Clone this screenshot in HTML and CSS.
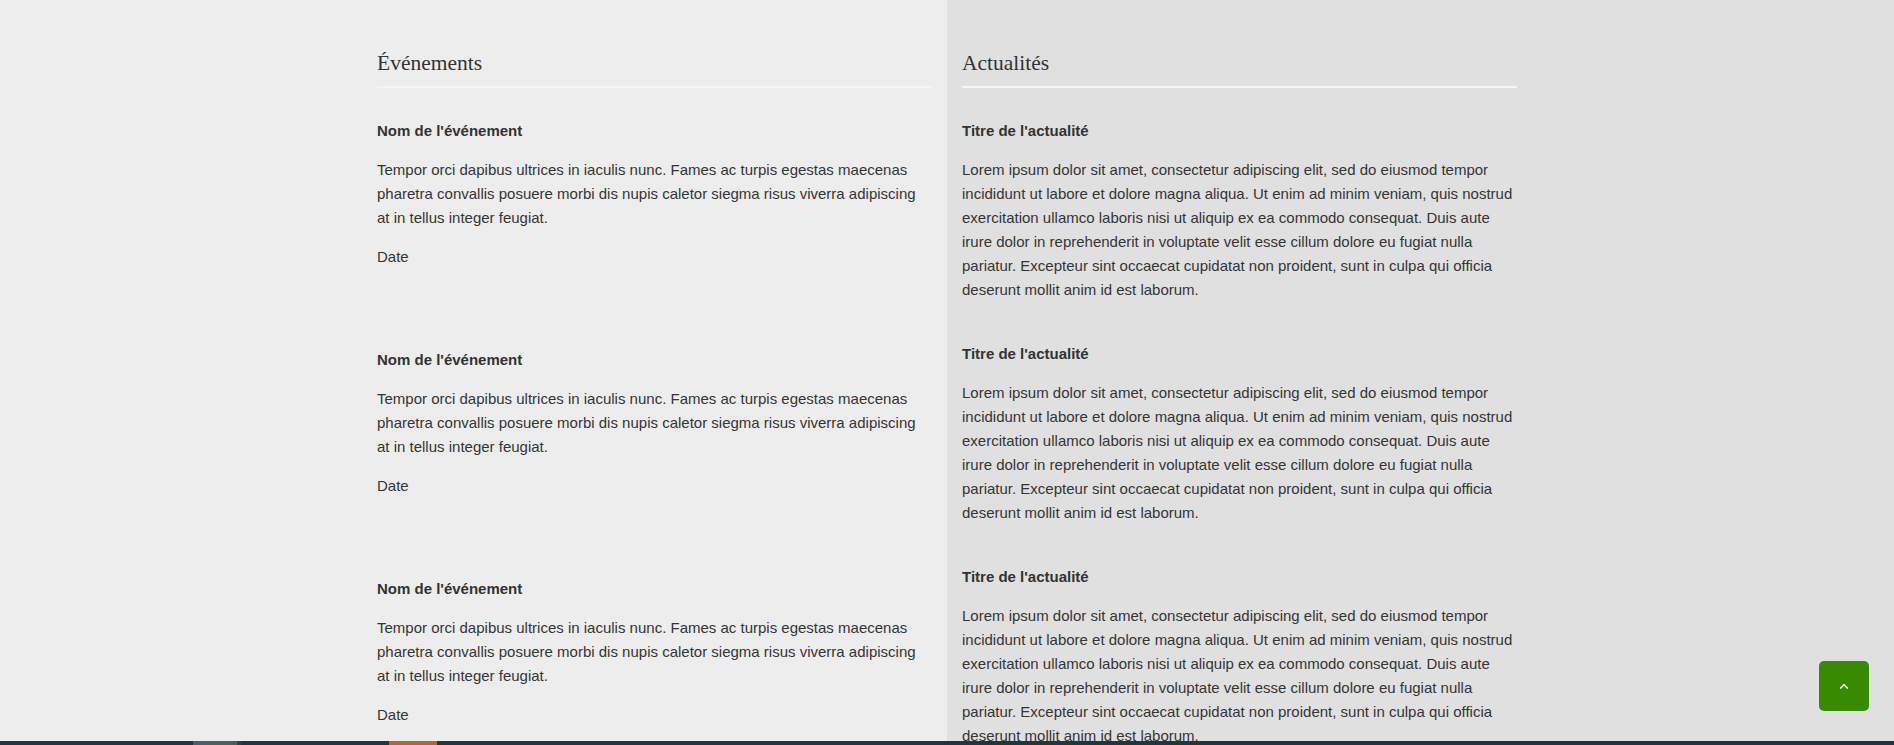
FILE: index.html
```html
<!DOCTYPE html>
<html lang="fr">
<head>
<meta charset="utf-8">
<title>Événements et actualités</title>
<link rel="stylesheet" href="styles.css">
</head>
<body>
<div class="page">
  <main class="split">
    <div class="container">
      <section class="col events">
        <h3 class="col-title">Événements</h3>
        <article class="item event">
          <h4 class="item-title">Nom de l'événement</h4>
          <p class="item-text">Tempor orci dapibus ultrices in iaculis nunc. Fames ac turpis egestas maecenas pharetra convallis posuere morbi dis nupis caletor siegma risus viverra adipiscing at in tellus integer feugiat.</p>
          <p class="item-date">Date</p>
        </article>
        <article class="item event">
          <h4 class="item-title">Nom de l'événement</h4>
          <p class="item-text">Tempor orci dapibus ultrices in iaculis nunc. Fames ac turpis egestas maecenas pharetra convallis posuere morbi dis nupis caletor siegma risus viverra adipiscing at in tellus integer feugiat.</p>
          <p class="item-date">Date</p>
        </article>
        <article class="item event">
          <h4 class="item-title">Nom de l'événement</h4>
          <p class="item-text">Tempor orci dapibus ultrices in iaculis nunc. Fames ac turpis egestas maecenas pharetra convallis posuere morbi dis nupis caletor siegma risus viverra adipiscing at in tellus integer feugiat.</p>
          <p class="item-date">Date</p>
        </article>
      </section>
      <section class="col news">
        <h3 class="col-title">Actualités</h3>
        <article class="item news-item">
          <h4 class="item-title">Titre de l'actualité</h4>
          <p class="item-text">Lorem ipsum dolor sit amet, consectetur adipiscing elit, sed do eiusmod tempor incididunt ut labore et dolore magna aliqua. Ut enim ad minim veniam, quis nostrud exercitation ullamco laboris nisi ut aliquip ex ea commodo consequat. Duis aute irure dolor in reprehenderit in voluptate velit esse cillum dolore eu fugiat nulla pariatur. Excepteur sint occaecat cupidatat non proident, sunt in culpa qui officia deserunt mollit anim id est laborum.</p>
        </article>
        <article class="item news-item">
          <h4 class="item-title">Titre de l'actualité</h4>
          <p class="item-text">Lorem ipsum dolor sit amet, consectetur adipiscing elit, sed do eiusmod tempor incididunt ut labore et dolore magna aliqua. Ut enim ad minim veniam, quis nostrud exercitation ullamco laboris nisi ut aliquip ex ea commodo consequat. Duis aute irure dolor in reprehenderit in voluptate velit esse cillum dolore eu fugiat nulla pariatur. Excepteur sint occaecat cupidatat non proident, sunt in culpa qui officia deserunt mollit anim id est laborum.</p>
        </article>
        <article class="item news-item">
          <h4 class="item-title">Titre de l'actualité</h4>
          <p class="item-text">Lorem ipsum dolor sit amet, consectetur adipiscing elit, sed do eiusmod tempor incididunt ut labore et dolore magna aliqua. Ut enim ad minim veniam, quis nostrud exercitation ullamco laboris nisi ut aliquip ex ea commodo consequat. Duis aute irure dolor in reprehenderit in voluptate velit esse cillum dolore eu fugiat nulla pariatur. Excepteur sint occaecat cupidatat non proident, sunt in culpa qui officia deserunt mollit anim id est laborum.</p>
        </article>
      </section>
    </div>
  </main>
  <footer class="footer-bar">
    <span class="seg seg-gray"></span><span class="seg seg-dim"></span><span class="seg seg-orange"></span>
  </footer>
</div>
<a class="to-top" href="#" aria-label="Haut de page">
  <svg width="10" height="7" viewBox="0 0 10 7"><polyline points="1.2,5.5 5,1.8 8.8,5.5" fill="none" stroke="#ffffff" stroke-width="1.6"/></svg>
</a>
</body>
</html>
```
FILE: styles.css
```css
html, body {
  margin: 0;
  padding: 0;
}
body {
  font-family: "Liberation Sans", Arial, sans-serif;
  font-size: 15px;
  line-height: 24px;
  color: #353535;
}
.page {
  height: 100vh;
  display: flex;
  flex-direction: column;
}
.split {
  flex: 1;
  min-height: 0;
  overflow: hidden;
  background: linear-gradient(90deg, #ededed 50%, #e0e0e0 50%);
}
.container {
  width: 1170px;
  margin: 0 auto;
  display: grid;
  grid-template-columns: 1fr 1fr;
}
.col {
  padding: 52px 15px 0;
}
.col-title {
  margin: 0 0 31px;
  padding-bottom: 11px;
  font-family: "Liberation Serif", "Times New Roman", serif;
  font-size: 21.5px;
  font-weight: normal;
  line-height: 23px;
  color: #333333;
  border-bottom: 2px solid #f5f5f5;
}
.item-title {
  margin: 0 0 15px;
  font-size: 15px;
  line-height: 24px;
  font-weight: bold;
  color: #333333;
}
.item-text {
  margin: 0;
}
.item-date {
  margin: 15px 0 0;
}
.event {
  margin-bottom: 79px;
}
.news-item {
  margin-bottom: 40px;
}
.footer-bar {
  height: 4px;
  flex: none;
  background: #1f363c;
  display: flex;
}
.seg {
  display: block;
  height: 100%;
}
.seg-gray {
  margin-left: 193px;
  width: 44px;
  background: #4d5d64;
}
.seg-dim {
  width: 4px;
  background: #2f4046;
}
.seg-orange {
  margin-left: 148px;
  width: 48px;
  background: #ad6a30;
}
.to-top {
  position: fixed;
  right: 25px;
  bottom: 34px;
  width: 50px;
  height: 50px;
  border-radius: 5px;
  background: #388a00;
  display: flex;
  align-items: center;
  justify-content: center;
}
.to-top svg {
  display: block;
}
```
